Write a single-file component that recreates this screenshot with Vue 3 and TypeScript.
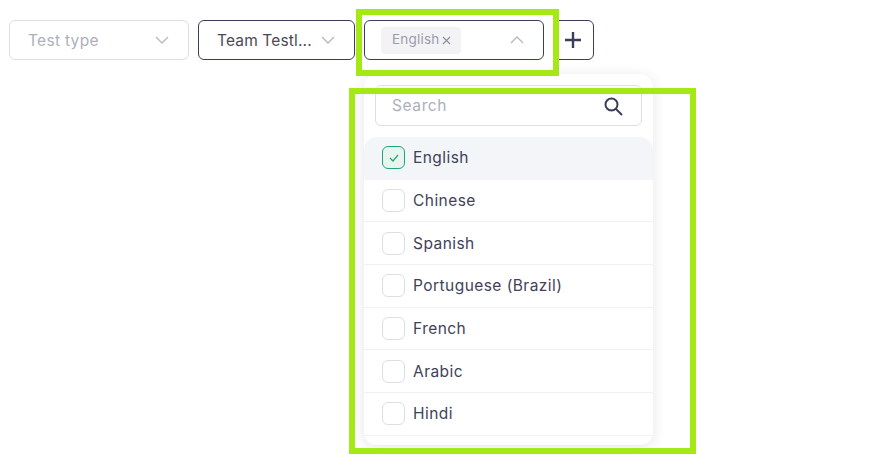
<script setup lang="ts">
const languages: string[] = ['English', 'Chinese', 'Spanish', 'Portuguese (Brazil)', 'French', 'Arabic', 'Hindi']
</script>

<template>
  <div class="page">
    <div class="filters">
      <div class="select muted">
        <span class="label">Test type</span>
        <svg class="chev" width="14" height="8" viewBox="0 0 14 8"><path d="M1 1l6 6 6-6" /></svg>
      </div>
      <div class="select team">
        <span class="label">Team Testl...</span>
        <svg class="chev" width="14" height="8" viewBox="0 0 14 8"><path d="M1 1l6 6 6-6" /></svg>
      </div>
      <div class="select lang">
        <span class="chip"><span class="chip-text">English</span><svg width="9" height="9" viewBox="0 0 9 9"><path d="M1 1l7 7M8 1l-7 7" /></svg></span>
        <svg class="chev" width="14" height="8" viewBox="0 0 14 8"><path d="M1 7l6-6 6 6" /></svg>
      </div>
      <button class="add" type="button" aria-label="Add">
        <svg width="18" height="18" viewBox="0 0 18 18"><path d="M9 1v16M1 9h16" /></svg>
      </button>
    </div>

    <div class="menu">
      <div class="search">
        <span class="search-text">Search</span>
        <svg width="20" height="20" viewBox="0 0 20 20"><circle cx="8.5" cy="8.5" r="6" /><path d="M13 13l5.5 5.5" /></svg>
      </div>
      <ul class="list">
        <li v-for="(l, i) in languages" :key="l" class="row" :class="{ active: i === 0 }">
          <span class="box">
            <svg v-if="i === 0" width="10" height="8" viewBox="0 0 10 8"><path d="M1 4l3 3 5-6" /></svg>
          </span>
          <span class="name">{{ l }}</span>
        </li>
      </ul>
    </div>

    <div class="frame frame-a"></div>
    <div class="frame frame-b"></div>
  </div>
</template>

<style scoped>
.page {
  position: relative;
  width: 882px;
  height: 455px;
  overflow: hidden;
  background: #fff;
  font-family: "Inter", "Open Sans", sans-serif;
}
.filters {
  display: flex;
  gap: 9px;
  padding: 20px 9px 0;
}
.select {
  box-sizing: border-box;
  height: 40px;
  border: 1px solid #3a3f55;
  border-radius: 6px;
  display: flex;
  align-items: center;
  justify-content: space-between;
  font-size: 15.5px;
  letter-spacing: 0.3px;
  color: #4a4a55;
}
.select.muted {
  width: 180px;
  border-color: #dcdee7;
  color: #adb0bc;
  padding: 0 19px 0 18px;
}
.select.team {
  width: 157px;
  padding: 0 19px 0 18px;
  letter-spacing: 0.15px;
}
.select.lang {
  width: 180px;
  padding: 0 19px 0 16px;
}
.chev {
  fill: none;
  stroke: #b5b8c2;
  stroke-width: 1.3;
}
.chip {
  display: flex;
  align-items: center;
  gap: 3px;
  height: 27px;
  padding: 0 10px 0 11px;
  border-radius: 4px;
  background: #f3f3f5;
  color: #9a9dab;
  font-size: 13.5px;
  letter-spacing: 0.2px;
}
.chip-text {
  margin-top: -2px;
}
.chip svg {
  fill: none;
  stroke: #8e909c;
  stroke-width: 1.2;
}
.add {
  box-sizing: border-box;
  width: 41px;
  height: 40px;
  padding: 0 1px 0 0;
  background: #fff;
  border: 1px solid #3a3f55;
  border-radius: 6px;
  display: flex;
  align-items: center;
  justify-content: center;
}
.add svg {
  fill: none;
  stroke: #3a3f55;
  stroke-width: 2.4;
}
.menu {
  position: absolute;
  left: 364px;
  top: 74px;
  box-sizing: border-box;
  width: 289px;
  height: 371px;
  padding-top: 11px;
  background: #fff;
  border-radius: 13px;
  box-shadow: 0 2px 14px rgba(40, 44, 70, 0.12);
}
.search {
  box-sizing: border-box;
  height: 41px;
  margin: 0 11px;
  padding: 0 18px 0 16px;
  border: 1px solid #dcdee7;
  border-radius: 6px;
  display: flex;
  align-items: center;
  justify-content: space-between;
  color: #adb0bc;
  font-size: 15.5px;
  letter-spacing: 0.6px;
}
.search svg {
  fill: none;
  stroke: #3a3f55;
  stroke-width: 2;
  stroke-linecap: round;
}
.list {
  list-style: none;
  margin: 11px 0 0;
  padding: 0;
}
.row {
  box-sizing: border-box;
  height: 42.67px;
  padding-left: 18px;
  display: flex;
  align-items: center;
  gap: 8px;
  border-bottom: 1px solid #f0f1f4;
  color: #3f4258;
  font-size: 15.5px;
  letter-spacing: 0.45px;
}
.row.active {
  background: #f4f5f9;
  border-bottom-color: transparent;
  border-radius: 13px 13px 0 0;
}
.box {
  box-sizing: border-box;
  width: 23px;
  height: 23px;
  border: 1px solid #dcdee7;
  border-radius: 6px;
  background: #fff;
  display: flex;
  align-items: center;
  justify-content: center;
}
.active .box {
  border-color: #1fa67a;
  background: #e8f5ef;
}
.box svg {
  fill: none;
  stroke: #1fa67a;
  stroke-width: 1.2;
}
.frame {
  position: absolute;
  box-sizing: border-box;
  border: 6px solid #a4e916;
  pointer-events: none;
}
.frame-a {
  left: 356px;
  top: 9px;
  width: 203px;
  height: 67px;
}
.frame-b {
  left: 349px;
  top: 88px;
  width: 347px;
  height: 366px;
}
</style>
